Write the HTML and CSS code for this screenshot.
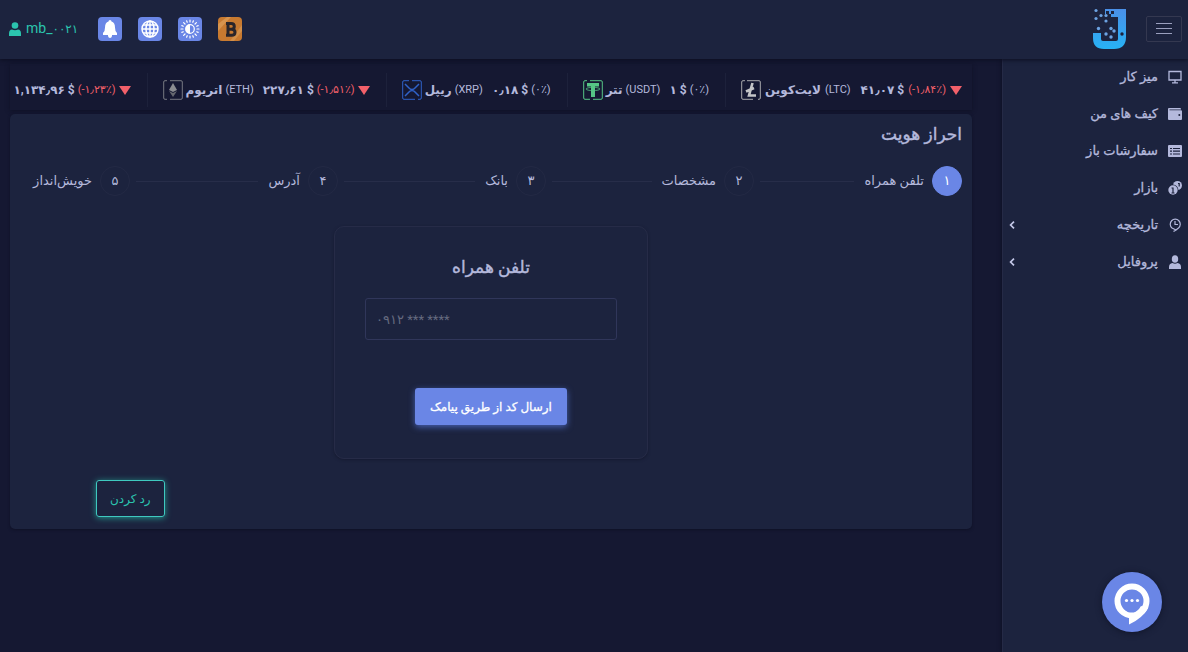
FILE: index.html
```html
<!DOCTYPE html>
<html lang="fa" dir="rtl">
<head>
<meta charset="utf-8">
<meta name="viewport" content="width=device-width, initial-scale=1">
<title>احراز هویت</title>
<link rel="stylesheet" href="styles.css">
</head>
<body>
<header class="topbar">
  <button class="burger" type="button" aria-label="منو">
    <svg viewBox="0 0 16 12" width="16" height="12"><path d="M0 .5h16M0 5.500h16M0 10.500h16" stroke="#9a9fbe"/></svg>
  </button>
  <a class="logo" href="#" aria-label="خانه">
    <svg viewBox="0 0 36 42" width="36" height="42">
      <defs><linearGradient id="lg" x1="0" y1="0" x2="0" y2="1"><stop offset="0" stop-color="#4a90e8"/><stop offset="1" stop-color="#27b2f5"/></linearGradient></defs>
      <path fill="url(#lg)" d="M14 1h21v28q0 12-12 12H13Q2 41 2 30v-5h8v6q0 2 2 2h13q2 0 2-2V9H17v-3h-3z"/>
      <g fill="#1d233d"><rect x="15" y="3" width="3" height="3"/><rect x="20" y="3" width="3" height="3"/><rect x="17" y="6" width="3" height="3"/><circle cx="31" cy="26" r="1.700"/></g>
      <g fill="#6da3e2"><circle cx="5" cy="2.500" r="1.600"/><circle cx="5" cy="10.500" r="1.600"/><circle cx="10" cy="7.500" r="1.600"/><circle cx="15" cy="7.500" r="1.600"/><circle cx="15" cy="13" r="1.600"/><circle cx="7.500" cy="20.500" r="1.700"/><circle cx="20" cy="20.500" r="1.700"/><circle cx="23" cy="23" r="1.700"/><circle cx="15" cy="26" r="1.700"/><circle cx="20" cy="29" r="1.700"/></g>
    </svg>
  </a>
  <div class="actions">
    <button class="tile tile-coin" type="button" aria-label="بیت‌کوین">
      <svg viewBox="0 0 24 24" width="24" height="24"><path fill="#e6ad6b" d="M0 7 9 0h4L0 14z" opacity=".5"/><path fill="#dba361" d="m24 14-8 10h-4L24 8z" opacity=".5"/><path fill="none" stroke="#29252a" stroke-width="3" d="M10 6v13M8 6.500h5q3.300 0 3.300 2.900T13 12.300h-3h3.500q3.500 0 3.500 3T13.500 18.300H8"/></svg>
    </button>
    <button class="tile" type="button" aria-label="حالت نمایش">
      <svg viewBox="0 0 24 24" width="24" height="24"><circle cx="12" cy="12" r="4.300" fill="none" stroke="#fff" stroke-width="1.200"/><path fill="#fff" d="M12 7.500a4.500 4.500 0 0 0 0 9z"/><path stroke="#fff" stroke-width="1.200" stroke-linecap="round" d="M12 3v2M12 19v2M3 12h2M19 12h2M5.600 5.600 7 7M17 17l1.400 1.400M5.600 18.400 7 17M17 7l1.400-1.400M8.600 3.800l.6 1.500M15.400 3.800l-.6 1.500M8.600 20.200l.6-1.500M15.400 20.200l-.6-1.500M3.800 8.600l1.500.6M3.800 15.400l1.500-.6M20.200 8.600l-1.500.6M20.200 15.400l-1.500-.6"/></svg>
    </button>
    <button class="tile" type="button" aria-label="زبان">
      <svg viewBox="0 0 24 24" width="24" height="24" fill="none" stroke="#fff" stroke-width="1.500"><circle cx="12" cy="12" r="8"/><ellipse cx="12" cy="12" rx="4" ry="8"/><path d="M12 4v16M4 12h16M5 8h14M5 16h14"/></svg>
    </button>
    <button class="tile" type="button" aria-label="اعلان‌ها">
      <svg viewBox="0 0 24 24" width="24" height="24" fill="#fff"><path d="M12 3q1.500 0 1.500 1.500Q17 5.500 17 10.500q0 4 2 5.500v2H5v-2q2-1.500 2-5.500 0-5 3.500-6Q10.500 3 12 3zM10 18h4v1q-.4 2-2 2t-2-2z"/></svg>
    </button>
  </div>
  <a class="user" href="#" dir="ltr">
    <svg viewBox="0 0 12 14" width="12" height="14" fill="#2bc4ae"><circle cx="6" cy="3.500" r="3.300"/><path d="M0 14v-2.500Q0 7.800 3 7.500q3 1.500 6 0 3 .3 3 4V14z"/></svg>
    <span>mb_<span class="digits">۰۰۲۱</span></span>
  </a>
</header>

<div class="shell">
  <nav class="side">
    <a class="side-link" href="#"><svg viewBox="0 0 14 14" width="14" height="14"><path d="M1 1.500h12v8.500H1zM4 12.800h6M7 10v3" fill="none" stroke="#b4b9dc" stroke-width="1.300"/></svg><span>میز کار</span></a>
    <a class="side-link" href="#"><svg viewBox="0 0 14 14" width="14" height="14"><path fill="#b4b9dc" d="M0 2q0-1 1-1h11q1 0 1 1v.5H1.500v.7H13q1 0 1 1V12q0 1-1 1H1q-1 0-1-1z"/><circle cx="11.300" cy="8" r="1" fill="#1d233d"/></svg><span>کیف های من</span></a>
    <a class="side-link" href="#"><svg viewBox="0 0 14 14" width="14" height="14"><rect y="1" width="14" height="12" rx="1" fill="#b4b9dc"/><path stroke="#1d233d" stroke-width="1.200" d="M2 4.500h2M5 4.500h7M2 7.200h2M5 7.200h7M2 10h2M5 10h7"/></svg><span>سفارشات باز</span></a>
    <a class="side-link" href="#"><svg viewBox="0 0 14 14" width="14" height="14"><circle cx="9.500" cy="4.500" r="4.500" fill="#b4b9dc"/><circle cx="5" cy="9" r="5.400" fill="#1d233d"/><circle cx="5" cy="9" r="4.700" fill="#b4b9dc"/><path stroke="#1d233d" stroke-width="1.200" fill="none" d="M3.500 7H5v5M3.500 12h3M10 2.500h1.200v3"/></svg><span>بازار</span></a>
    <a class="side-link" href="#"><svg viewBox="0 0 14 14" width="14" height="14" fill="none" stroke="#b4b9dc" stroke-width="1.200"><path d="M4 10A5 5 0 1 1 10.500 10M7 3v3.500h3M4 10l4 2-2.500 1.500M8 12l2.500-2"/></svg><span>تاریخچه</span><svg class="chev" viewBox="0 0 6 8" width="6" height="8"><path d="M5 .6 1.600 4 5 7.400" fill="none" stroke="#c3c8e8" stroke-width="1.700"/></svg></a>
    <a class="side-link" href="#"><svg viewBox="0 0 14 14" width="14" height="14" fill="#b4b9dc"><ellipse cx="7" cy="4" rx="3.200" ry="3.800"/><path d="M1 14v-2q0-3.500 3.500-4 2.500 1.500 5 0 3.500.5 3.500 4v2z"/></svg><span>پروفایل</span><svg class="chev" viewBox="0 0 6 8" width="6" height="8"><path d="M5 .6 1.600 4 5 7.400" fill="none" stroke="#c3c8e8" stroke-width="1.700"/></svg></a>
  </nav>

  <main class="main">
    <div class="ticker" dir="ltr">
      <div class="coin"><b class="price">۱,۱۳۴٫۹۶ $</b><span class="pct down">(-۱٫۲۳٪)</span><i class="arrow"></i></div>
      <div class="coin"><svg viewBox="0 0 20 20" width="20" height="20"><path d="M4 .7H2Q.7.700.7 2v16q0 1.300 1.300 1.300h2M7 .7h11q1.300 0 1.300 1.300v16q0 1.300-1.300 1.300H7" fill="none" stroke="#777a82"/><path fill="#8b8d91" d="m10 3 4 7-4 2-4-2z"/><path fill="#66686f" d="m10 17-4-6 4 2 4-2z"/></svg><b class="name">اتریوم</b><span class="sym">(ETH)</span><b class="price">۲۲۷٫۶۱ $</b><span class="pct down">(-۱٫۵۱٪)</span><i class="arrow"></i></div>
      <div class="coin"><svg viewBox="0 0 20 20" width="20" height="20" fill="none" stroke="#2f62c9"><path d="M7 .7H2Q.7.700.7 2v16q0 1.300 1.300 1.300h11M10 .7h8q1.300 0 1.300 1.300v16q0 1.300-1.300 1.300h-2"/><path stroke-width="1.500" d="m3 4 4.500 4.500q2.500 2 5 0L17 4M3 16l4.500-4.500q2.500-2 5 0L17 16"/></svg><b class="name">ریپل</b><span class="sym">(XRP)</span><b class="price">۰٫۱۸ $</b><span class="pct">(۰٪)</span></div>
      <div class="coin"><svg viewBox="0 0 20 20" width="20" height="20"><path d="M4 .7H2Q.7.700.7 2v16q0 1.300 1.300 1.300h5M7 .7h11q1.300 0 1.300 1.300v16q0 1.300-1.300 1.300h-8" fill="none" stroke="#55c585"/><path fill="#55c585" d="M4 3h12v3.500h-4V17H8V6.500H4z"/><ellipse cx="10" cy="9" rx="7" ry="1.600" fill="none" stroke="#55c585" stroke-width=".8"/></svg><b class="name">تتر</b><span class="sym">(USDT)</span><b class="price">۱ $</b><span class="pct">(۰٪)</span></div>
      <div class="coin"><svg viewBox="0 0 20 20" width="20" height="20"><path d="M4 .7H2Q.7.700.7 2v16q0 1.300 1.300 1.300h10M6 .7h12q1.300 0 1.300 1.300v16q0 1.300-1.300 1.300h-1" fill="none" stroke="#a9aaad"/><path fill="none" stroke="#c4c5c7" stroke-width="2.600" d="M11.500 3 8 15.500h7M5 11.500l8-3.500"/></svg><b class="name">لایت‌کوین</b><span class="sym">(LTC)</span><b class="price">۴۱٫۰۷ $</b><span class="pct down">(-۱٫۸۴٪)</span><i class="arrow"></i></div>
    </div>

    <section class="panel">
      <h1 class="panel-title">احراز هویت</h1>
      <ol class="steps">
        <li class="step active"><span class="dot">۱</span><span class="label">تلفن همراه</span></li>
        <li class="step"><span class="dot">۲</span><span class="label">مشخصات</span></li>
        <li class="step"><span class="dot">۳</span><span class="label">بانک</span></li>
        <li class="step"><span class="dot">۴</span><span class="label">آدرس</span></li>
        <li class="step"><span class="dot">۵</span><span class="label">خویش‌انداز</span></li>
      </ol>
      <form class="phone">
        <h2 class="phone-title"><label for="mobile">تلفن همراه</label></h2>
        <input class="phone-input" id="mobile" type="tel" dir="ltr" placeholder="۰۹۱۲ *** ****">
        <button class="send" type="button">ارسال کد از طریق پیامک</button>
      </form>
      <div class="footer"><button class="skip" type="button">رد کردن</button></div>
    </section>
  </main>
</div>

<button class="chat" type="button" aria-label="گفتگو">
  <svg viewBox="0 0 60 60" width="60" height="60"><circle cx="30" cy="29" r="14.500" fill="none" stroke="#fff" stroke-width="6"/><path fill="#fff" d="M27 39v13.500Q41 46 46 36l-7-2q-3 6-12 9z"/><path fill="#6a86e6" d="M22 36l4.500 4.500L27 38.500z"/><g fill="#fff"><circle cx="24.500" cy="28.500" r="1.600"/><circle cx="30" cy="28.500" r="1.600"/><circle cx="35.500" cy="28.500" r="1.600"/></g></svg>
</button>
</body>
</html>
```

FILE: styles.css
```css
* { box-sizing: border-box; }

:root {
  --bg: #151832;
  --panel: #1c233e;
  --line: #272d49;
  --text: #b4b9dc;
  --accent: #6a86e6;
  --green: #2bc4ae;
  --red: #f2606a;
}

body {
  margin: 0;
  min-height: 100vh;
  display: flex;
  flex-direction: column;
  background: var(--bg);
  color: var(--text);
  font: 13px/20px Roboto, "DejaVu Sans", sans-serif;
}

button, input { font: inherit; }
button { cursor: pointer; }
a { color: inherit; text-decoration: none; }
svg { display: block; flex: none; }

.topbar {
  display: flex;
  align-items: center;
  height: 59px;
  padding: 0 6px 2px 9px;
  background: var(--panel);
  box-shadow: 0 1px 4px #0c0e20;
  z-index: 1;
}

.burger {
  display: grid;
  place-items: center;
  width: 36px;
  height: 26px;
  padding: 0;
  background: none;
  border: 1px solid #343850;
  border-radius: 2px;
}

.logo { margin-inline-start: 19px; }

.actions {
  display: flex;
  gap: 16px;
  margin-inline: auto 20px;
}

.tile {
  width: 24px;
  height: 24px;
  padding: 0;
  border: 0;
  border-radius: 4px;
  background: var(--accent);
  overflow: hidden;
}

.tile-coin { background: #c87a30; }

.user {
  display: flex;
  align-items: center;
  gap: 5px;
  color: var(--green);
  font-size: 14px;
}

.digits { font-size: 12px; }

.shell {
  display: flex;
  flex: 1;
}

.side {
  flex: none;
  width: 186px;
  background: var(--panel);
  border-left: 1px solid #252a46;
  box-shadow: 0 0 4px #0c0e20;
}

.side-link {
  display: flex;
  align-items: center;
  gap: 10px;
  height: 37px;
  padding: 0 6px 1px;
  font-size: 13px;
  -webkit-text-stroke: 0.3px;
}

.chev { margin-inline-start: auto; }

.main {
  flex: 1;
  min-width: 0;
  padding: 5px 30px 0 10px;
}

.ticker {
  display: flex;
  justify-content: flex-end;
  height: 46px;
  margin-bottom: 4px;
  overflow: hidden;
  box-shadow: 0 1px 4px #0f1126;
}

.coin {
  display: flex;
  flex: none;
  align-items: center;
  gap: 3px;
  margin: 9px 0 3px;
  padding: 0 16px 0 15px;
  border-left: 1px solid #1d213b;
  white-space: nowrap;
}

.coin:first-child { border-left: 0; padding-left: 0; }
.coin:last-child { gap: 4px; padding-right: 10px; }

.name { font-size: 12px; }
.sym { font-size: 11px; margin-right: 6px; }
.price { font-size: 12px; }
.pct { font-size: 11px; }
.down { color: var(--red); }

.arrow {
  border: 6px solid transparent;
  border-top: 9px solid var(--red);
  border-bottom: 0;
}

.panel {
  padding: 10px 10px 12px;
  background: var(--panel);
  border-radius: 5px;
  box-shadow: 0 1px 3px #0f1126;
}

.panel-title, .phone-title {
  margin: 0;
  font-size: 17px;
  font-weight: 400;
  -webkit-text-stroke: 0.4px;
}

.steps {
  display: grid;
  grid-template-columns: repeat(4, 1fr) 110px;
  margin: 22px 0 30px;
  padding: 0;
  list-style: none;
}

.step {
  display: flex;
  align-items: center;
  gap: 8px;
  white-space: nowrap;
}

.step:not(:last-child)::after {
  content: "";
  flex: 1;
  height: 1px;
  margin-inline: 2px 6px;
  background: var(--line);
}

.dot {
  display: grid;
  place-items: center;
  width: 30px;
  height: 30px;
  border: 1px solid #232944;
  border-radius: 50%;
}

.active .dot {
  background: var(--accent);
  border-color: var(--accent);
  color: #fff;
}

.phone {
  display: flex;
  flex-direction: column;
  align-items: center;
  width: 33.33%;
  margin: 0 auto;
  padding: 30px 30px 33px;
  border: 1px solid #262b47;
  border-radius: 10px;
  box-shadow: 0 1px 3px #151a30;
}

.phone-input {
  width: 100%;
  height: 42px;
  margin: 21px 0 48px;
  padding: 0 10px;
  background: none;
  border: 1px solid #30365a;
  border-radius: 3px;
  color: var(--text);
  font-size: 13px;
}

.phone-input::placeholder { color: #656a7e; opacity: 1; }

.send, .skip {
  height: 37px;
  padding: 0 13px;
  border-radius: 3px;
  font-size: 12px;
  white-space: nowrap;
}

.send {
  padding: 0 15px;
  background: var(--accent);
  border: 0;
  color: #fff;
  -webkit-text-stroke: 0.3px;
  box-shadow: 0 2px 6px #4660b0;
}

.footer {
  display: flex;
  justify-content: flex-end;
  margin: 21px 0 0;
  padding-inline-end: 76px;
}

.skip {
  background: none;
  border: 1px solid #3fc9c0;
  color: var(--green);
  box-shadow: 0 1px 6px #24968c;
}

.chat {
  position: fixed;
  right: 26px;
  bottom: 20px;
  width: 60px;
  height: 60px;
  padding: 0;
  border: 0;
  border-radius: 50%;
  background: var(--accent);
  box-shadow: 0 1px 6px #11152a;
  z-index: 2;
}
```
